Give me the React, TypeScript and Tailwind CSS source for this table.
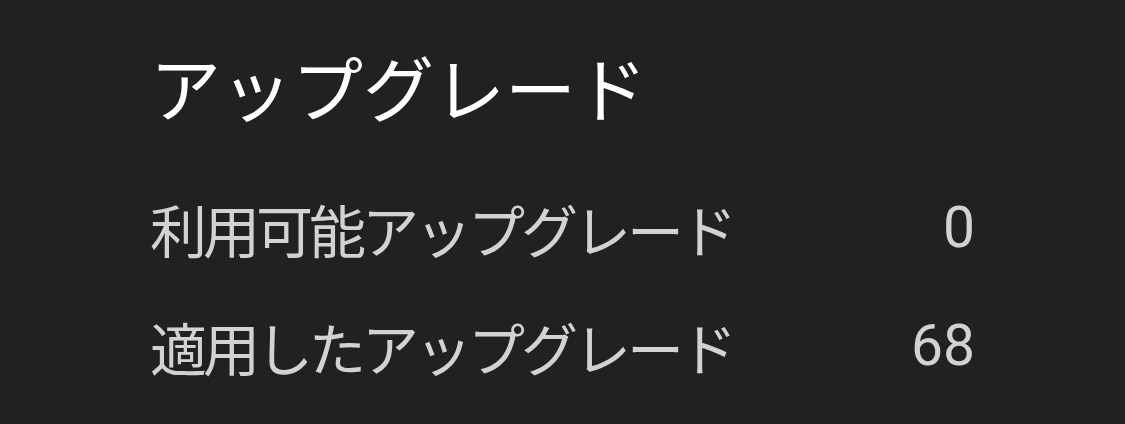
const rows = [
  { label: '利用可能アップグレード', value: '0' },
  { label: '適用したアップグレード', value: '68' },
];

export default function App() {
  return (
    <div className="h-[424px] w-full bg-[#212121] px-[150px] font-['Noto_Sans_CJK_JP',sans-serif]">
      <h1 className="pt-[40px] text-[71px] leading-[90px] font-normal text-white">アップグレード</h1>
      <div className="mt-[70px] flex flex-col gap-[62px]">
        {rows.map((row) => (
          <div key={row.label} className="flex h-[56px] items-center justify-between text-[#d2d2d2]">
            <span className="text-[57px] leading-[56px] tracking-[-4px]">{row.label}</span>
            <span className="font-['Roboto',sans-serif] text-[57px] leading-[56px]">{row.value}</span>
          </div>
        ))}
      </div>
    </div>
  );
}
